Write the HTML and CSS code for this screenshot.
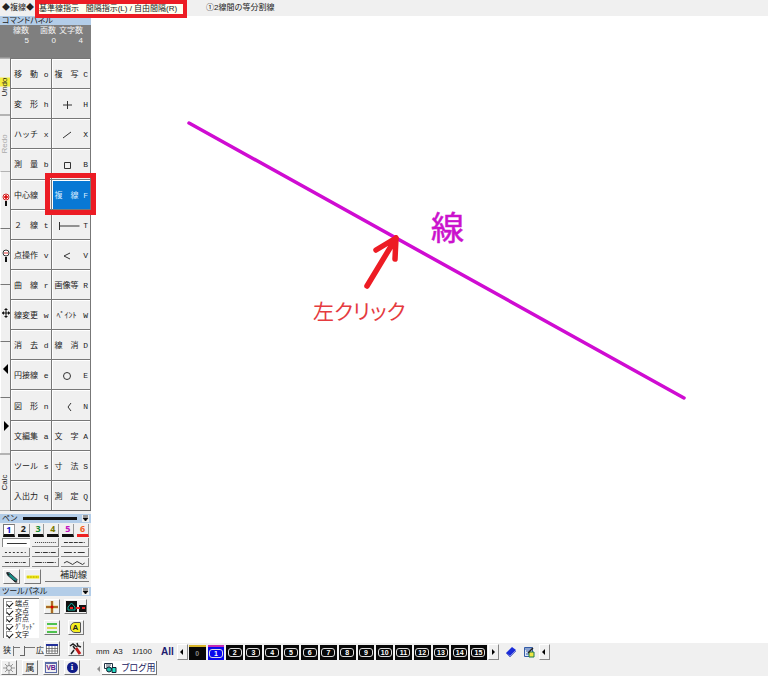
FILE: index.html
```html
<!DOCTYPE html>
<html lang="ja">
<head>
<meta charset="utf-8">
<title>複線</title>
<meta name="viewport" content="width=device-width">
<link rel="stylesheet" href="styles.css">
</head>
<body>
<header class="message-bar">
  <span class="mode">◆複線◆</span>
  <p class="prompt">基準線指示&nbsp;&nbsp; 間隔指示(L) / 自由間隔(R)</p>
  <span class="hint">①2線間の等分割線</span>
</header>
<main class="workspace">
  <aside class="sidebar">
    <h2 class="panel-title">コマンドパネル</h2>
    <dl class="counts">
      <div><dt>線数</dt><dd>5</dd></div>
      <div><dt>面数</dt><dd>0</dd></div>
      <div><dt>文字数</dt><dd>4</dd></div>
    </dl>
    <div class="command-area">
      <nav class="strip" aria-label="表示">
        <button class="vertical undo">Un<mark>do</mark></button>
        <button class="vertical" disabled>Redo</button>
        <button aria-label="拡大"><svg viewBox="0 0 8 16"><circle cx="4" cy="5" r="3" fill="#fff" stroke="#c22"/><path d="M2 5h4M4 3v4" stroke="#d00" stroke-width="1.5"/><path d="M4 9v5" stroke="#111" stroke-width="2"/></svg></button>
        <button aria-label="縮小"><svg viewBox="0 0 8 16"><circle cx="4" cy="5" r="3" fill="#fff" stroke="#333"/><path d="M2 5h4" stroke="#d33"/><path d="M4 9v5" stroke="#111" stroke-width="2"/></svg></button>
        <button aria-label="移動表示"><svg viewBox="0 0 8 16"><path d="M0 8h8M4 4v8" stroke="#111"/><path d="M4 3l2 2H2zM4 13l2-2H2zM0 8l2-2v4zM8 8L6 6v4z" fill="#111"/></svg></button>
        <button aria-label="前へ"><svg viewBox="0 0 8 16"><path d="M1 8l5-5v10z"/></svg></button>
        <button aria-label="次へ"><svg viewBox="0 0 8 16"><path d="M7 8L2 3v10z"/></svg></button>
        <button class="vertical">Calc</button>
      </nav>
      <div class="commands">
        <button><span>移　動</span><kbd>o</kbd></button><button><span>複　写</span><kbd>C</kbd></button>
        <button><span>変　形</span><kbd>h</kbd></button><button aria-label="点"><svg viewBox="0 0 24 10"><path d="M8 5h9M12.500 1v8"/></svg><kbd>H</kbd></button>
        <button><span>ハッチ</span><kbd>x</kbd></button><button aria-label="線"><svg viewBox="0 0 24 10"><path d="M8 8l8-6"/></svg><kbd>X</kbd></button>
        <button><span>測　量</span><kbd>b</kbd></button><button aria-label="矩形"><svg viewBox="0 0 24 10"><path d="M9.500 2.500h6v6h-6z"/></svg><kbd>B</kbd></button>
        <button><span>中心線</span><kbd></kbd></button><button class="selected" aria-pressed="true"><span>複　線</span><kbd>F</kbd></button>
        <button><span>２　線</span><kbd>t</kbd></button><button aria-label="寸法線"><svg viewBox="0 0 24 10"><path d="M4.500 1v8M4.500 5h20"/></svg><kbd>T</kbd></button>
        <button><span>点操作</span><kbd>v</kbd></button><button aria-label="角"><svg viewBox="0 0 24 10"><path d="M15 2L9 5l6 3"/></svg><kbd>V</kbd></button>
        <button><span>曲　線</span><kbd>r</kbd></button><button><span>画像等</span><kbd>R</kbd></button>
        <button><span>線変更</span><kbd>w</kbd></button><button><span>ﾍﾟｲﾝﾄ</span><kbd>W</kbd></button>
        <button><span>消　去</span><kbd>d</kbd></button><button><span>線　消</span><kbd>D</kbd></button>
        <button><span>円接線</span><kbd>e</kbd></button><button aria-label="円"><svg viewBox="0 0 24 10"><circle cx="12" cy="5" r="3.500"/></svg><kbd>E</kbd></button>
        <button><span>図　形</span><kbd>n</kbd></button><button aria-label="円弧"><svg viewBox="0 0 24 10"><path d="M16 1l-3 4 3 4"/></svg><kbd>N</kbd></button>
        <button><span>文編集</span><kbd>a</kbd></button><button><span>文　字</span><kbd>A</kbd></button>
        <button><span>ツール</span><kbd>s</kbd></button><button><span>寸　法</span><kbd>S</kbd></button>
        <button><span>入出力</span><kbd>q</kbd></button><button><span>測　定</span><kbd>Q</kbd></button>
      </div>
    </div>
    <section class="pen-panel">
      <h2 class="panel-title"><span>ペン</span><i class="current-line"></i><button class="menu" aria-label="ペンメニュー"><svg viewBox="0 0 7 7"><path d="M1 1h5M1 3h5L3.500 6z" stroke="#111" stroke-width=".8"/></svg></button></h2>
      <div class="pens">
        <button class="pen blue active">1</button><button class="pen">2</button><button class="pen green">3</button><button class="pen olive">4</button><button class="pen magenta">5</button><button class="pen red">6</button>
      </div>
      <div class="line-types">
        <button class="active" aria-label="実線"><svg viewBox="0 0 27 9"><path d="M4 4.500h20"/></svg></button>
        <button aria-label="点線1"><svg viewBox="0 0 27 9"><path d="M3 4.500h21" stroke-dasharray="1 1"/></svg></button>
        <button aria-label="破線1"><svg viewBox="0 0 27 9"><path d="M3 4.500h21" stroke-dasharray="4 1"/></svg></button>
        <button aria-label="点線2"><svg viewBox="0 0 27 9"><path d="M3 4.500h21" stroke-dasharray="2 2"/></svg></button>
        <button aria-label="一点鎖線1"><svg viewBox="0 0 27 9"><path d="M3 4.500h21" stroke-dasharray="5 1 1 1"/></svg></button>
        <button aria-label="一点鎖線2"><svg viewBox="0 0 27 9"><path d="M3 4.500h21" stroke-dasharray="8 2 2 2"/></svg></button>
        <button aria-label="二点鎖線1"><svg viewBox="0 0 27 9"><path d="M3 4.500h21" stroke-dasharray="4 1 1 1 1 1"/></svg></button>
        <button aria-label="二点鎖線2"><svg viewBox="0 0 27 9"><path d="M3 4.500h21" stroke-dasharray="7 1 1 1 1 1"/></svg></button>
        <button aria-label="倍長線"><svg viewBox="0 0 27 9"><path d="M3 5q3-3 6 0t5 0 5 0 5 0"/></svg></button>
      </div>
      <div class="pen-tools">
        <button class="tool" aria-label="鉛筆"><svg viewBox="0 0 16 14"><path d="M2 2l3 0 9 8-2 3L3 5z" fill="#178c83" stroke="#223"/><path d="M2 2l3 3M10 11l4 2" stroke="#222" stroke-width="1.500"/></svg></button>
        <button class="tool" aria-label="マーカー"><svg viewBox="0 0 18 14"><path d="M1 7h16" stroke="#f5ef16" stroke-width="4"/><path d="M1 7h16" stroke="#b5a600" stroke-width="2" stroke-dasharray="1 1"/></svg></button>
        <button class="aux">補助線</button>
      </div>
    </section>
    <section class="tool-panel">
      <h2 class="panel-title"><span>ツールパネル</span><button class="menu" aria-label="ツールメニュー"><svg viewBox="0 0 7 7"><path d="M1 1h5M1 3h5L3.500 6z" stroke="#111" stroke-width=".8"/></svg></button></h2>
      <div class="tool-body">
        <div class="snaps">
          <label><input type="checkbox" checked>端点</label>
          <label><input type="checkbox" checked>交点</label>
          <label><input type="checkbox" checked>折点</label>
          <label><input type="checkbox" checked>ｸﾞﾘｯﾄﾞ</label>
          <label><input type="checkbox" checked>文字</label>
        </div>
        <div class="tool-grid">
          <button class="tool" aria-label="十字"><svg viewBox="0 0 14 14"><path d="M1 7h12M7 1v12" stroke="#d8b000" stroke-width="2.500"/><path d="M1 7h12M7 1v12" stroke="#7c2450"/><circle cx="7" cy="7" r="1.500" fill="#d00"/></svg></button>
          <button class="tool wide" aria-label="建物"><svg viewBox="0 0 20 12"><path d="M0 0h11v11H0zM13 4h7v7h-7z" fill="#111"/><path d="M2 6l3.500-4L9 6v3H2z" fill="none" stroke="#17b5a5"/><path d="M4 7h3M10 7h4M16 7h3" stroke="#e22" stroke-width="2"/></svg></button>
          <button class="tool" aria-label="線レイヤ"><svg viewBox="0 0 14 14"><path d="M2 3h10" stroke="#1ab31a" stroke-width="1.500"/><path d="M2 7h10" stroke="#d6d01a" stroke-width="1.500"/><path d="M2 11h10" stroke="#1ab31a" stroke-width="1.500"/></svg></button>
          <button class="tool badge-a" aria-label="文字属性"><span>A</span></button>
          <button class="tool" aria-label="表"><svg viewBox="0 0 14 14"><path d="M1.500 3.500h11v8h-11zM1 6.500h12M1 9h12M4 4v7M7 4v7M10 4v7" fill="#fff" stroke="#555" stroke-width=".7"/><path d="M1 2h12v2H1z" fill="#22309a"/></svg></button>
          <button class="tool" aria-label="道具"><svg viewBox="0 0 14 14"><path d="M7 6l4 6" stroke="#c01919" stroke-width="3"/><path d="M1 4l3-2 4 3M8 1l1 3 3 1M4 4l2 3M5 8l-3 4" fill="none" stroke="#222" stroke-width="1.500"/></svg></button>
        </div>
        <label class="reach"><span>狭</span><input type="range" min="0" max="10" value="4" aria-label="範囲"><span>広</span></label>
      </div>
    </section>
    <div class="quick">
      <button class="tool" aria-label="設定"><svg viewBox="0 0 14 14"><circle cx="7" cy="7" r="2.500" fill="none" stroke="#888"/><path d="M7 1v3M7 10v3M1 7h3M10 7h3M3 3l2 2M9 9l2 2M3 11l2-2M9 5l2-2" stroke="#999"/></svg></button>
      <button class="tool zoku">属</button>
      <button class="tool vb"><span>VB</span></button>
      <button class="tool info"><span>i</span></button>
    </div>
  </aside>
  <section class="view">
    <svg class="drawing" viewBox="91 16 677 627" preserveAspectRatio="xMinYMin meet" role="img" aria-label="図面">
      <path d="M189 123L684 398" stroke="#cf0cd2" stroke-width="3.500" stroke-linecap="round"/>
      <path d="M367 286L396 238M376 250L396 238L395 259" fill="none" stroke="#ed1c24" stroke-width="5.500" stroke-linecap="round" stroke-linejoin="round"/>
      <text class="line-name" x="431" y="240" stroke-width=".5">線</text>
      <text class="click-note" x="313" y="319">左クリック</text>
    </svg>
    <footer class="status">
      <div class="status-row">
        <span class="unit">mm</span><span class="paper">A3</span><span class="scale">1/100</span>
        <button class="all">All</button>
        <button class="arrow" aria-label="前のレイヤ"><svg viewBox="0 0 6 8"><path d="M1 4l3-3v6z"/></svg></button>
        <div class="layers">
          <button class="layer off used"><b>0</b></button><button class="layer current used"><b>1</b></button><button class="layer"><b>2</b></button><button class="layer"><b>3</b></button><button class="layer"><b>4</b></button><button class="layer"><b>5</b></button><button class="layer"><b>6</b></button><button class="layer"><b>7</b></button><button class="layer"><b>8</b></button><button class="layer"><b>9</b></button><button class="layer"><b>10</b></button><button class="layer"><b>11</b></button><button class="layer"><b>12</b></button><button class="layer"><b>13</b></button><button class="layer"><b>14</b></button><button class="layer"><b>15</b></button>
        </div>
        <button class="arrow" aria-label="次のレイヤ"><svg viewBox="0 0 6 8"><path d="M5 4L2 1v6z"/></svg></button>
        <button class="flat" aria-label="レイヤ"><svg viewBox="0 0 12 12"><path d="M1 7l6-6 4 3-6 6z" fill="#1a2bd8"/><path d="M1 7l4 4 6-6" fill="none" stroke="#6674cc"/></svg></button>
        <button class="flat" aria-label="レイヤ編集"><svg viewBox="0 0 12 12"><path d="M1.500 1.500h8v9h-8z" fill="#dce6f5" stroke="#345ca8"/><path d="M2 3h7M3 5h4M3 8h3" stroke="#345ca8"/><path d="M6 6h5v5H6z" fill="#efe645" stroke="#18784a"/><path d="M5 7l5-5" stroke="#222" stroke-width="1.500"/></svg></button>
        <button class="arrow last" aria-label="折りたたむ"><svg viewBox="0 0 6 8"><path d="M1 4l3-3v6z"/></svg></button>
      </div>
      <div class="sheet-row">
        <button class="sheet-prev" aria-label="前の図面"><svg viewBox="0 0 6 8"><path d="M1 4l3-3v6z"/></svg></button>
        <button class="sheet"><svg viewBox="0 0 14 12"><path d="M1.500 1.500h8v5h-8z" fill="#fff" stroke="#234"/><path d="M3 3h5M3 5h4" stroke="#456"/><circle cx="6" cy="7.500" r="2.500" fill="#25bfae" stroke="#123"/><path d="M9 5.500h4v5H9z" fill="#25dfc7" stroke="#123"/></svg>ブログ用</button>
      </div>
    </footer>
  </section>
</main>
</body>
</html>
```
FILE: styles.css
```css
* { box-sizing: border-box; }

body {
  margin: 0;
  min-height: 100vh;
  display: flex;
  flex-direction: column;
  background: #f0f0f0;
  color: #222;
  font: 8px/10px "Liberation Sans", "Noto Sans CJK JP", sans-serif;
}

h2, p, dl, dd { margin: 0; }

button {
  display: flex;
  align-items: center;
  justify-content: center;
  min-width: 0;
  min-height: 0;
  margin: 0;
  padding: 0;
  border: 0;
  border-radius: 0;
  background: #f0f0f0;
  color: inherit;
  font: inherit;
}

svg { display: block; }

/* Message bar */
.message-bar {
  display: flex;
  align-items: flex-start;
  height: 16px;
  white-space: nowrap;
  line-height: 16px;
}
.mode { width: 35px; padding-left: 2px; }
.prompt {
  z-index: 1;
  width: 152px;
  height: 18px;
  border: 4px solid #ec1c24;
  background: #fffff0;
  line-height: 10px;
}
.hint { padding-left: 19px; }

.workspace { flex: 1; display: flex; }

/* Sidebar */
.sidebar {
  width: 91px;
  flex: none;
  display: flex;
  flex-direction: column;
}
.panel-title {
  display: flex;
  align-items: center;
  height: 9px;
  padding: 0 2px;
  background: #b3cde8;
  font-size: 8px;
  font-weight: 400;
  font-feature-settings: "palt";
  line-height: 9px;
}
.counts {
  display: grid;
  grid-template-columns: 29px 27px 27px;
  height: 33px;
  padding-top: 1px;
  background: #7f7f7f;
  color: #f4f4f4;
  text-align: right;
  white-space: nowrap;
}
.command-area {
  flex: 1;
  display: grid;
  grid-template-columns: 10px 1fr;
  border-bottom: 1px solid #666;
}
.strip { display: grid; grid-auto-rows: 1fr; }
.strip button {
  border-top: 1px solid #777;
  border-left: 1px solid #fff;
}
.strip svg { width: 8px; height: 16px; }
.strip .vertical {
  writing-mode: vertical-rl;
  transform: rotate(180deg);
  border: 0;
  border-bottom: 1px solid #777;
}
.strip mark { background: #f3ec3c; color: inherit; }
.strip button:disabled { color: #aaa; }
.commands {
  display: grid;
  grid-template-columns: 1fr 1fr;
  grid-auto-rows: 1fr;
}
.commands button {
  position: relative;
  justify-content: space-between;
  padding: 3px 2px 0 3px;
  border-top: 1px solid #777;
  border-left: 1px solid #777;
  box-shadow: inset 1px 1px #fff;
  white-space: nowrap;
}
.commands button:nth-child(even) { border-right: 1px solid #777; }
.commands span { width: 24px; text-align: center; }
.commands kbd { font: 8px/10px "Liberation Mono", monospace; }
.commands svg {
  width: 24px;
  height: 10px;
  overflow: visible;
  fill: none;
  stroke: #333;
}
.commands .selected { z-index: 1; background: #0878d4; color: #d7edff; }
.selected::after {
  content: "";
  position: absolute;
  inset: -7px -6px -6px -7px;
  border: 5px solid #ec1c24;
}

/* Pens */
.pen-panel { padding-top: 3px; }
.current-line { flex: 1; height: 3px; margin: 0 5px 0 6px; background: #111; }
.menu { width: 7px; height: 7px; margin-left: auto; }
.menu svg { width: 7px; height: 7px; }
.pens {
  display: grid;
  grid-template-columns: repeat(6, 1fr);
  gap: 3px;
  height: 15px;
  padding: 1px 2px 1px 3px;
}
.pen {
  border-bottom: 3px solid #111;
  border-right: 1px solid #999;
  font: bold 9px/10px "Noto Sans", sans-serif;
}
.pen.active { border-top: 1px solid #777; border-left: 1px solid #777; background: #fff; }
.blue { color: #1a1ad0; }
.green { color: #168a31; }
.olive { color: #787800; }
.magenta { color: #c112c1; }
.red { color: #f45b20; border-bottom-color: #e22; }
.line-types {
  display: grid;
  grid-template-columns: repeat(3, 1fr);
  gap: 1px 2px;
  padding: 0 2px;
}
.line-types button { height: 9px; border: solid #888; border-width: 0 1px 1px 0; }
.line-types .active { border-width: 1px 0 0 1px; background: #fff; }
.line-types svg { width: 27px; height: 9px; fill: none; stroke: #333; }
.pen-tools { display: flex; gap: 4px; padding: 2px 2px 3px 3px; }
.tool {
  width: 16px;
  height: 15px;
  border: 1px solid;
  border-color: #fff #777 #777 #fff;
}
.tool svg { width: 14px; height: 14px; }
.pen-tools .tool { width: 17px; }
.aux { flex: 1; height: 13px; justify-content: flex-end; padding-right: 2px; border-bottom: 1px solid #777; font-size: 9px; }

/* Tool panel */
.tool-body {
  display: grid;
  grid-template-columns: 36px 1fr;
  grid-template-rows: 1fr 16px;
  gap: 0 5px;
  height: 63px;
  padding: 2px 2px 0 3px;
}
.snaps {
  display: grid;
  grid-auto-rows: 1fr;
  height: 40px;
  padding: 1px 0 0 2px;
  border: solid #777;
  border-width: 1px 0 0 1px;
  background: #fff;
  font-size: 7px;
  line-height: 7px;
  white-space: nowrap;
}
.snaps label { display: flex; align-items: center; gap: 3px; min-height: 0; }
.snaps input {
  appearance: none;
  flex: none;
  width: 6px;
  height: 6px;
  margin: 0;
  border: solid #999;
  border-width: 1px 0 0 1px;
  display: grid;
  place-items: center;
}
.snaps input:checked::before {
  content: "";
  width: 5px;
  height: 3px;
  border: solid #111;
  border-width: 0 0 1px 1px;
  transform: rotate(-45deg);
}
.tool-grid {
  grid-column: 2;
  grid-row: 1 / 3;
  display: grid;
  grid-template-columns: 16px 23px;
  gap: 6px 4px;
  align-content: start;
  justify-items: center;
  padding-top: 1px;
}
.tool-grid .wide { width: 23px; }
.wide svg { width: 20px; height: 12px; }
.badge-a span {
  width: 11px;
  border: 1px solid #555;
  border-radius: 5px 1px 1px 5px;
  background: #f5ef20;
  font-weight: 700;
  line-height: 9px;
}
.reach { display: flex; align-items: center; justify-content: space-between; grid-row: 2; width: 41px; height: 16px; }
.reach input { appearance: none; width: 22px; height: 10px; margin: 0; background: linear-gradient(#777, #777) 0 1px / 100% 1px no-repeat; border-left: 1px solid #777; }
.reach input::-webkit-slider-thumb { appearance: none; width: 5px; height: 10px; border: solid #666; border-width: 0 1px 1px 0; background: #f0f0f0; }
.quick { display: flex; gap: 5px; height: 17px; padding: 0 1px; border-top: 1px solid #fff; }
.zoku { font-size: 9px; }
.vb { color: #5c168d; font-weight: 700; }
.vb span { border: 1px solid #5a6aa8; border-top-width: 2px; font-size: 7px; line-height: 8px; }
.info span { width: 11px; height: 11px; border-radius: 50%; background: #111c88; color: #fff; font: bold 9px/11px "Liberation Serif", serif; }

/* Drawing and status */
.view { flex: 1; min-width: 0; display: flex; flex-direction: column; background: #fff; }
.drawing { flex: 1; width: 100%; min-height: 0; height: 0; }
.line-name { fill: #cb11cd; stroke: #cb11cd; font: 33px "Noto Sans CJK JP", sans-serif; }
.click-note { fill: #e53b3f; font: 21px "Noto Sans CJK JP", sans-serif; font-feature-settings: "palt"; }
.status { height: 33px; padding-left: 5px; background: #f0f0f0; }
.status-row { display: flex; align-items: center; height: 18px; white-space: nowrap; }
.unit { width: 17px; }
.paper { width: 19px; }
.scale { width: 29px; }
.all { margin-right: 3px; color: #1c1c70; font-weight: 700; font-size: 10px; }
.arrow {
  flex: none;
  width: 11px;
  height: 16px;
  border: 1px solid;
  border-color: #fff #888 #888 #fff;
}
.arrow svg, .sheet-prev svg { width: 6px; height: 8px; }
.layers { display: grid; grid-template-columns: repeat(16, 1fr); gap: 2px; width: 300px; padding: 0 1px; }
.layer { height: 15px; background: #070707; color: #fff; }
.layer b { width: 14px; height: 9px; border: 1px solid #ddd; border-radius: 3px; font-size: 7px; line-height: 7px; }
.layer.used { border-top: 2px solid #d8b529; }
.layer.off b { border-color: transparent; color: #888; }
.layer.current { background: #0808ed; border-top-color: #c32bb4; }
.flat { width: 12px; margin-left: 6px; }
.flat svg { width: 12px; height: 12px; }
.last { margin-left: 4px; }
.sheet-row { display: flex; height: 15px; }
.sheet-prev { width: 6px; opacity: .4; }
.sheet { width: 55px; height: 14px; gap: 5px; border-right: 1px solid #777; border-bottom: 1px solid #777; background: #fff; color: #202060; font-feature-settings: "palt"; font-size: 9px; }
.sheet svg { width: 14px; height: 12px; }
```
